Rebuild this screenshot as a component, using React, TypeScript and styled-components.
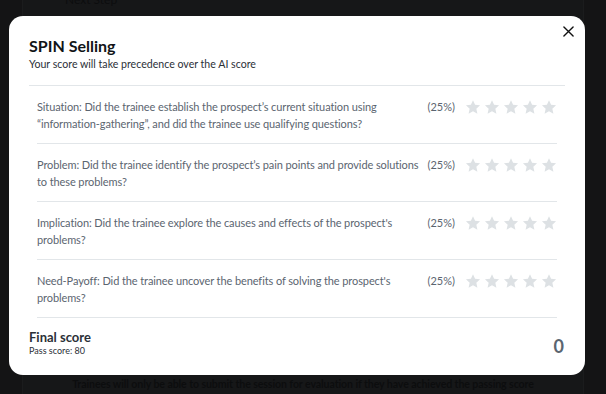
import React from 'react';
import styled, { createGlobalStyle } from 'styled-components';

const GlobalStyle = createGlobalStyle`
    html, body {
        margin: 0;
        padding: 0;
        width: 606px;
        height: 394px;
        overflow: hidden;
        background: #141516;
        font-family: 'Lato', 'Open Sans', sans-serif;
    }
`;

// Page that sits behind the modal (only faint traces are visible)
const Page = styled.div`
    width: 606px;
    height: 394px;
    display: flex;
    flex-direction: column;
    padding: 0 22px;
    box-sizing: border-box;
`;

const PageCard = styled.div`
    flex: 1;
    display: flex;
    flex-direction: column;
    background: #17181a;
    border-left: 1px solid #1d1e20;
    border-right: 1px solid #1d1e20;
    padding: 0 20px;
`;

const GhostText = styled.div<{ $bold?: boolean }>`
    color: #0b0c0d;
    font-size: 12px;
    font-weight: ${(p) => (p.$bold ? 700 : 400)};
    line-height: 16px;
    white-space: nowrap;
`;

const GhostTop = styled(GhostText)`
    margin-top: -8px;
    padding-left: 22px;
`;

const GhostSpacer = styled.div`
    flex: 1;
`;

const GhostFooter = styled(GhostText)`
    padding-bottom: 2px;
    text-align: center;
    font-size: 10.6px;
    letter-spacing: -0.1px;
`;

const Backdrop = styled.div`
    position: fixed;
    inset: 0;
    background: rgba(20, 21, 22, 0.2);
`;

const Modal = styled.div`
    position: absolute;
    left: 9px;
    top: 16px;
    width: 576px;
    height: 359px;
    box-sizing: border-box;
    background: #ffffff;
    border-radius: 14px;
    padding: 20px 20px 0;
    display: flex;
    flex-direction: column;
`;

const CloseButton = styled.button`
    position: absolute;
    top: 5px;
    right: 7px;
    width: 20px;
    height: 20px;
    padding: 0;
    border: none;
    background: none;
    display: flex;
    align-items: center;
    justify-content: center;
    cursor: pointer;
`;

const Title = styled.h2`
    margin: 0;
    font-size: 16px;
    font-weight: 700;
    line-height: 20px;
    color: #111417;
`;

const Subtitle = styled.p`
    margin: 0;
    font-size: 10.6px;
    line-height: 16px;
    color: #2b3037;
    padding-bottom: 13px;
    border-bottom: 1px solid #e2e6e9;
`;

const Criteria = styled.div`
    display: flex;
    flex-direction: column;
    margin: 0 8px;
`;

const Row = styled.div`
    display: flex;
    align-items: flex-start;
    gap: 10px;
    padding: 12px 0 11px;
    border-bottom: 1px solid #e2e6e9;
`;

const Question = styled.div`
    flex: 1;
    min-width: 0;
    font-size: 11px;
    letter-spacing: -0.1px;
    line-height: 17px;
    color: #5b6570;
`;

const QuestionLine = styled.div`
    white-space: nowrap;
`;

const Weight = styled.span`
    font-size: 11px;
    line-height: 17px;
    color: #5b6570;
    white-space: nowrap;
`;

const Stars = styled.div`
    display: flex;
    gap: 3px;
    height: 17px;
    align-items: center;
`;

const Footer = styled.div`
    display: flex;
    justify-content: space-between;
    align-items: flex-end;
    padding: 11px 1px 0 0;
`;

const FinalLabel = styled.div`
    font-size: 13px;
    font-weight: 700;
    line-height: 16px;
    color: #2b3037;
`;

const PassScore = styled.div`
    font-size: 9px;
    line-height: 11px;
    color: #2b3037;
`;

const ScoreValue = styled.div`
    font-size: 18px;
    font-weight: 700;
    line-height: 20px;
    color: #5b6570;
`;

const Star = () => (
    <svg width="16" height="16" viewBox="0 0 24 24">
        <path
            d="M12 1.8l3.1 6.9 7.5.8-5.6 5.1 1.6 7.4L12 18.2 5.4 22l1.6-7.4L1.4 9.5l7.5-.8z"
            fill="#dde1e4"
        />
    </svg>
);

const criteria = [
    {
        lines: [
            'Situation: Did the trainee establish the prospect\u2019s current situation using',
            '\u201cinformation-gathering\u201d, and did the trainee use qualifying questions?',
        ],
        weight: 25,
    },
    {
        lines: [
            'Problem: Did the trainee identify the prospect\u2019s pain points and provide solutions',
            'to these problems?',
        ],
        weight: 25,
    },
    {
        lines: ["Implication: Did the trainee explore the causes and effects of the prospect's", 'problems?'],
        weight: 25,
    },
    {
        lines: ["Need-Payoff: Did the trainee uncover the benefits of solving the prospect's", 'problems?'],
        weight: 25,
    },
];

export default function App() {
    return (
        <>
            <GlobalStyle />
            <Page>
                <PageCard>
                    <GhostTop>Next Step</GhostTop>
                    <GhostSpacer />
                    <GhostFooter $bold>
                        Trainees will only be able to submit the session for evaluation if they have achieved the passing score
                    </GhostFooter>
                </PageCard>
            </Page>
            <Backdrop>
                <Modal>
                    <CloseButton aria-label="Close">
                        <svg width="11" height="11" viewBox="0 0 12 12">
                            <path d="M1 1l10 10M11 1L1 11" stroke="#111" strokeWidth="1.5" strokeLinecap="round" />
                        </svg>
                    </CloseButton>
                    <Title>SPIN Selling</Title>
                    <Subtitle>Your score will take precedence over the AI score</Subtitle>
                    <Criteria>
                        {criteria.map((c) => (
                            <Row key={c.lines[0]}>
                                <Question>
                                    {c.lines.map((l) => (
                                        <QuestionLine key={l}>{l}</QuestionLine>
                                    ))}
                                </Question>
                                <Weight>({c.weight}%)</Weight>
                                <Stars>
                                    {[0, 1, 2, 3, 4].map((i) => (
                                        <Star key={i} />
                                    ))}
                                </Stars>
                            </Row>
                        ))}
                    </Criteria>
                    <Footer>
                        <div>
                            <FinalLabel>Final score</FinalLabel>
                            <PassScore>Pass score: 80</PassScore>
                        </div>
                        <ScoreValue>0</ScoreValue>
                    </Footer>
                </Modal>
            </Backdrop>
        </>
    );
}
